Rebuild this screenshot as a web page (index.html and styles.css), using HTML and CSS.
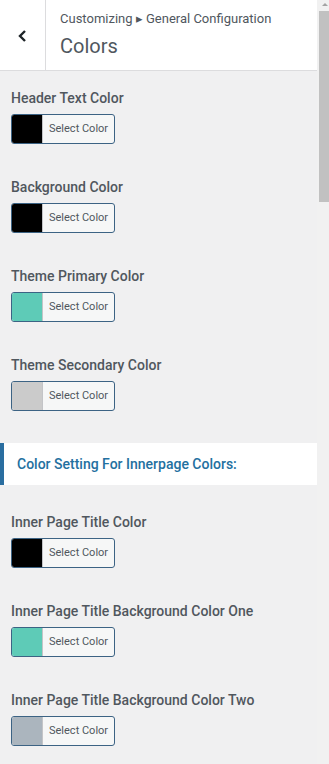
FILE: index.html
```html
<!DOCTYPE html>
<html lang="en">
<head>
    <meta charset="UTF-8">
    <meta name="viewport" content="width=device-width, initial-scale=1.0">
    <title>Colors</title>
    <link rel="stylesheet" href="styles.css">
</head>
<body>
    <div class="panel">
        <div class="panel-header">
            <div class="back">
                <svg width="12" height="14" viewBox="0 0 12 14"><polyline points="8,2 3,7 8,12" fill="none" stroke="#1d2327" stroke-width="2.4"/></svg>
            </div>
            <div class="titles">
                <div class="crumb">Customizing &#9656; General Configuration</div>
                <div class="title">Colors</div>
            </div>
        </div>

        <div class="content">
            <div class="control">
                <label>Header Text Color</label>
                <div class="color-btn"><span class="swatch black"></span><span class="btn-text">Select Color</span></div>
            </div>
            <div class="control">
                <label>Background Color</label>
                <div class="color-btn"><span class="swatch black"></span><span class="btn-text">Select Color</span></div>
            </div>
            <div class="control">
                <label>Theme Primary Color</label>
                <div class="color-btn"><span class="swatch teal"></span><span class="btn-text">Select Color</span></div>
            </div>
            <div class="control">
                <label>Theme Secondary Color</label>
                <div class="color-btn"><span class="swatch grey"></span><span class="btn-text">Select Color</span></div>
            </div>

            <!-- inner page section -->
            <div class="group-title">Color Setting For Innerpage Colors:</div>

            <div class="control">
                <label>Inner Page Title Color</label>
                <div class="color-btn"><span class="swatch black"></span><span class="btn-text">Select Color</span></div>
            </div>
            <div class="control">
                <label>Inner Page Title Background Color One</label>
                <div class="color-btn"><span class="swatch teal"></span><span class="btn-text">Select Color</span></div>
            </div>
            <div class="control">
                <label>Inner Page Title Background Color Two</label>
                <div class="color-btn"><span class="swatch slate"></span><span class="btn-text">Select Color</span></div>
            </div>
        </div>
    </div>

    <div class="scrollbar">
        <div class="arrow"></div>
        <div class="thumb"></div>
    </div>
</body>
</html>
```

FILE: styles.css
```css
body {
    font-family: Roboto, "Liberation Sans", sans-serif;
    margin: 0;
    height: 764px;
    overflow: hidden;
    display: flex;
    background-color: #f0f0f1;
    color: #50575e;
}
.panel {
    flex: 1;
    min-width: 0;
}
.panel-header {
    display: flex;
    height: 70px;
    background-color: #fff;
    border-bottom: 1px solid #dcdcde;
}
.back {
    width: 46px;
    border-right: 1px solid #dcdcde;
    display: flex;
    justify-content: center;
    align-items: center;
    padding-top: 1px;
    box-sizing: border-box;
}
.titles {
    padding: 10px 0 0 14px;
}
.crumb {
    font-size: 13px;
    line-height: 18px;
}
.title {
    font-size: 20px;
    line-height: 28px;
    margin-top: 4px;
}
.content {
    padding-top: 17px;
}
.control {
    padding: 0 11px;
    margin-bottom: 33px;
}
.control label {
    display: block;
    font-size: 14px;
    line-height: 20px;
    font-weight: 500;
    margin-bottom: 6px;
}
.color-btn {
    display: flex;
    width: 104px;
    height: 30px;
    box-sizing: border-box;
    border: 1px solid #3c6384;
    border-radius: 3px;
    overflow: hidden;
    background-color: #f6f7f7;
}
.swatch {
    width: 30px;
    border-right: 1px solid #c3c4c7;
}
.swatch.black { background-color: #000; }
.swatch.teal { background-color: #5ecbb7; }
.swatch.grey { background-color: #cbcbcb; }
.swatch.slate { background-color: #abb5be; }
.btn-text {
    font-size: 11px;
    line-height: 28px;
    padding-left: 6px;
    color: #50575e;
}
.group-title {
    background-color: #fff;
    border-left: 4px solid #2a6ea0;
    height: 42px;
    box-sizing: border-box;
    padding-left: 13px;
    line-height: 42px;
    font-size: 14px;
    font-weight: 500;
    color: #23709f;
    margin: -1px 0 27px;
}
.scrollbar {
    width: 12px;
    background-color: #f1f1f1;
}
.arrow {
    width: 0;
    height: 0;
    margin: 3px 0 0 5px;
    border-left: 3px solid transparent;
    border-right: 3px solid transparent;
    border-bottom: 3px solid #a3a3a3;
}
.thumb {
    margin: 5px 0 0 2px;
    height: 191px;
    background-color: #c1c1c1;
}
```
